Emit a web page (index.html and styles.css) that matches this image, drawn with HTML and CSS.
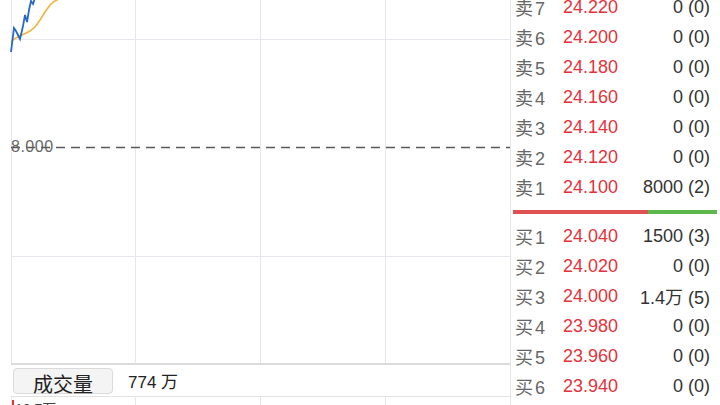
FILE: index.html
```html
<!DOCTYPE html>
<html lang="zh-CN">
<head>
    <meta charset="UTF-8">
    <meta name="viewport" content="width=device-width, initial-scale=1.0">
    <title>分时盘口</title>
    <link rel="stylesheet" href="styles.css">
</head>
<body>
    <div class="quote">
        <!-- 分时图 + 成交量 -->
        <div class="chart-pane">
            <div class="chart">
                <svg class="chart-svg" width="499" height="363" viewBox="0 0 499 363">
                    <!-- 网格 -->
                    <g class="grid">
                        <line x1="0.5" y1="0" x2="0.5" y2="363"/>
                        <line x1="124.5" y1="0" x2="124.5" y2="363"/>
                        <line x1="249.5" y1="0" x2="249.5" y2="363"/>
                        <line x1="374.5" y1="0" x2="374.5" y2="363"/>
                        <line x1="0" y1="39.5" x2="499" y2="39.5"/>
                        <line x1="0" y1="256.5" x2="499" y2="256.5"/>
                    </g>
                    <!-- 昨收线 -->
                    <line class="pre-close" x1="0" y1="147.5" x2="499" y2="147.5"/>
                    <!-- 均价 -->
                    <polyline class="avg-line" points="0,42 3,39 9,36 15,33 19,31 24,27 29,20 34,12 39,5 44,1 48,-1"/>
                    <!-- 价格 -->
                    <polyline class="price-line" points="0,52 3,28 5,31 9,39 12,26 14,15 16,22 18,10 20,1 22,4 24,-2"/>
                </svg>
                <span class="axis-label">8.000</span>
            </div>
            <div class="vol-head">
                <button class="vol-btn" type="button">成交量</button>
                <span class="vol-total">774 万</span>
            </div>
            <div class="vol-chart">
                <svg class="grid" width="499" height="10" viewBox="0 0 499 10">
                    <line x1="124.5" y1="0" x2="124.5" y2="10"/>
                    <line x1="249.5" y1="0" x2="249.5" y2="10"/>
                    <line x1="374.5" y1="0" x2="374.5" y2="10"/>
                </svg>
                <span class="vol-bar-first"></span>
                <span class="vol-max">10.7万</span>
            </div>
        </div>

        <!-- 盘口 -->
        <div class="book">
            <div class="book-rows" id="askRows"></div>
            <div class="ratio">
                <div class="ratio-buy" style="width: 66%"></div>
                <div class="ratio-sell"></div>
            </div>
            <div class="book-rows" id="bidRows"></div>
        </div>
    </div>

    <script>
        const asks = [
            ['卖', '7', '24.220', '0 (0)'],
            ['卖', '6', '24.200', '0 (0)'],
            ['卖', '5', '24.180', '0 (0)'],
            ['卖', '4', '24.160', '0 (0)'],
            ['卖', '3', '24.140', '0 (0)'],
            ['卖', '2', '24.120', '0 (0)'],
            ['卖', '1', '24.100', '8000 (2)']
        ];
        const bids = [
            ['买', '1', '24.040', '1500 (3)'],
            ['买', '2', '24.020', '0 (0)'],
            ['买', '3', '24.000', '1.4万 (5)'],
            ['买', '4', '23.980', '0 (0)'],
            ['买', '5', '23.960', '0 (0)'],
            ['买', '6', '23.940', '0 (0)']
        ];

        function fillRows(id, rows) {
            const box = document.getElementById(id);
            rows.forEach(r => {
                const row = document.createElement('div');
                row.className = 'book-row';
                row.innerHTML = `
                    <span class="lvl">${r[0]}<span class="lvl-no">${r[1]}</span></span>
                    <span class="price">${r[2]}</span>
                    <span class="qty">${r[3]}</span>
                `;
                box.appendChild(row);
            });
        }

        fillRows('askRows', asks);
        fillRows('bidRows', bids);
    </script>
</body>
</html>
```

FILE: styles.css
```css
/* 页面 */
body {
    margin: 0;
    background-color: #fff;
    font-family: 'Liberation Sans', 'Noto Sans CJK SC', sans-serif;
    overflow: hidden;
}

.quote {
    display: flex;
    width: 720px;
    height: 405px;
    overflow: hidden;
}

/* 左侧图表 */
.chart-pane {
    width: 499px;
    padding-left: 11px;
    flex-shrink: 0;
}

.chart {
    position: relative;
    height: 363px;
    border-bottom: 2px solid #dcdcdc;
}

.chart-svg {
    display: block;
    overflow: visible;
}

.grid line {
    stroke: #e6e6ec;
    stroke-width: 1;
}

.pre-close {
    stroke: #5a5a5a;
    stroke-width: 1.5;
    stroke-dasharray: 9 6;
}

.avg-line {
    fill: none;
    stroke: #f2b233;
    stroke-width: 1.5;
}

.price-line {
    fill: none;
    stroke: #2a68c8;
    stroke-width: 1.8;
}

.axis-label {
    position: absolute;
    left: 0;
    top: 137px;
    font-size: 16px;
    color: #666;
    line-height: 20px;
    letter-spacing: 0.5px;
}

/* 成交量 */
.vol-head {
    display: flex;
    align-items: center;
    gap: 15px;
    height: 31px;
    border-bottom: 1px solid #e2e2e2;
}

.vol-btn {
    width: 100px;
    height: 26px;
    margin-left: 2px;
    padding: 0;
    font-family: inherit;
    font-size: 20px;
    color: #222;
    background-color: #f4f4f4;
    border: 1px solid #dadada;
    border-radius: 4px;
}

.vol-total {
    font-size: 17px;
    color: #222;
}

.vol-chart {
    position: relative;
    height: 10px;
    border-left: 1px solid #e6e6ec;
}

.vol-chart .grid {
    display: block;
    margin-left: -1px;
}

.vol-bar-first {
    position: absolute;
    left: 0;
    top: 3px;
    width: 2px;
    height: 10px;
    background-color: #e8313a;
}

.vol-max {
    position: absolute;
    left: 3px;
    top: 4px;
    font-size: 14px;
    color: #444;
    line-height: 16px;
}

/* 右侧盘口 */
.book {
    width: 210px;
    border-left: 1px solid #e6e6e6;
    margin-top: -8px;
}

.book-row {
    display: grid;
    grid-template-columns: 40px 63px 1fr;
    align-items: center;
    height: 30px;
    padding: 0 10px 0 4px;
    font-size: 18px;
}

.lvl {
    color: #666;
}

.lvl-no {
    margin-left: 2px;
}

.price {
    color: #e5323a;
    text-align: right;
}

.qty {
    color: #333;
    text-align: right;
}

.ratio {
    display: flex;
    height: 4px;
    margin: 8px 3px 7px 2px;
}

.ratio-buy {
    background-color: #e05252;
}

.ratio-sell {
    flex: 1;
    background-color: #5db84c;
}
```
